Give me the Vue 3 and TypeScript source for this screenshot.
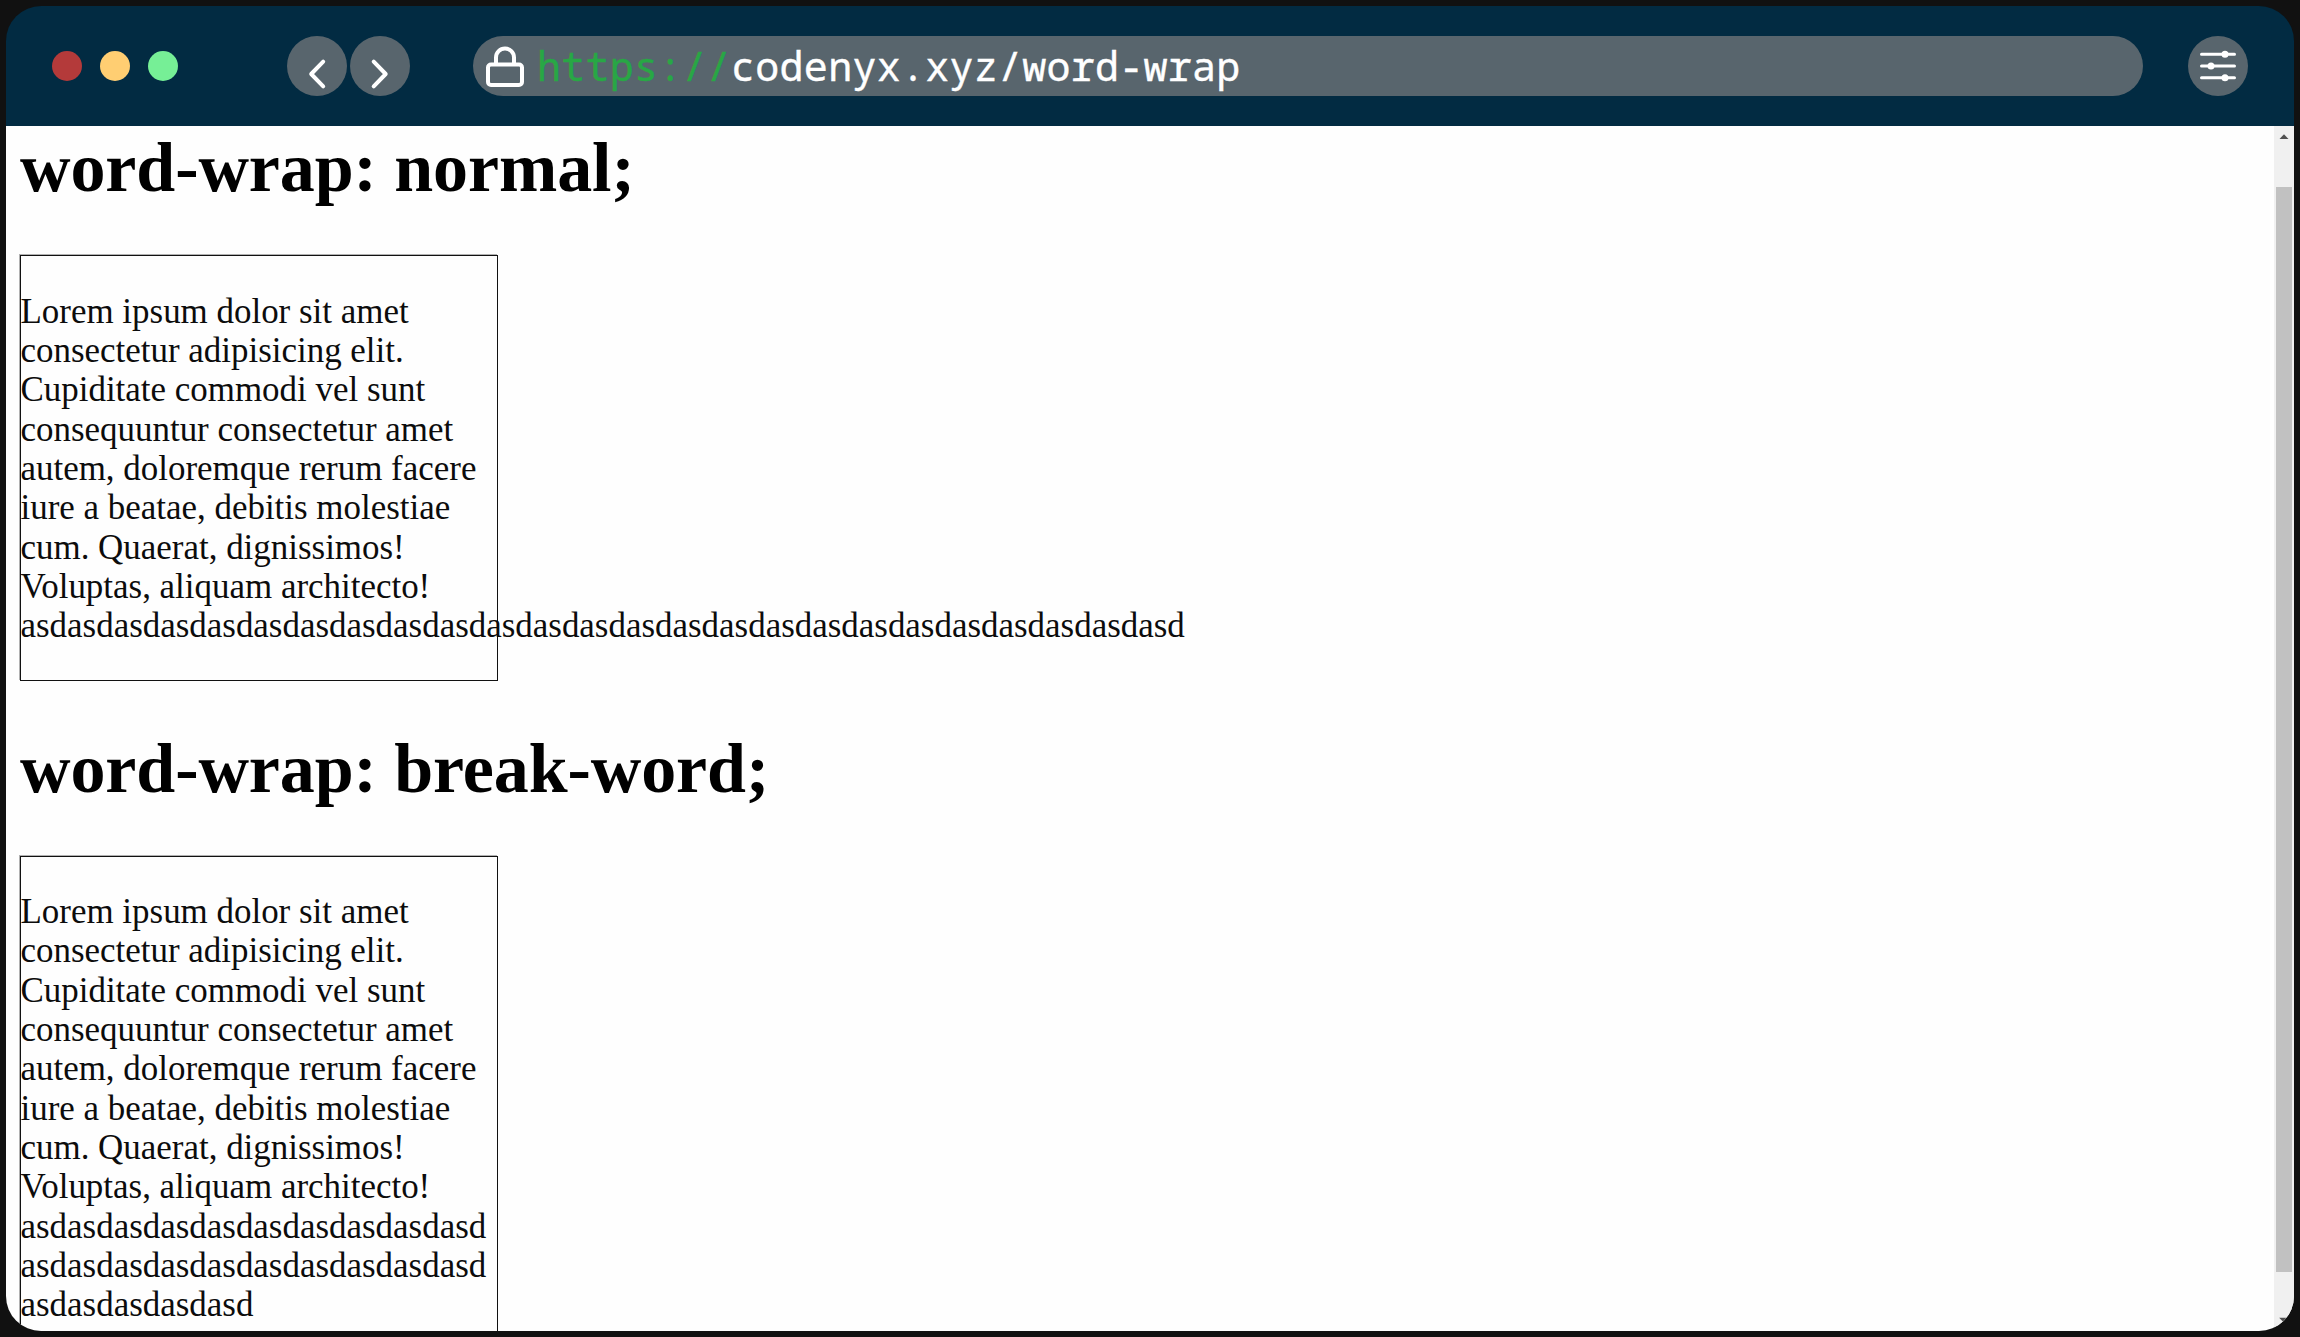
<script setup lang="ts">
interface Demo {
  value: string
  wrap: 'normal' | 'break-word'
}

const demos: Demo[] = [
  { value: 'normal', wrap: 'normal' },
  { value: 'break-word', wrap: 'break-word' },
]

const lights: string[] = ['red', 'yellow', 'green']
const longWord: string = 'asd'.repeat(25)
</script>

<template>
  <div class="frame">
    <div class="window">
      <header class="toolbar">
        <div class="lights">
          <span v-for="c in lights" :key="c" class="light" :class="c"></span>
        </div>
        <nav class="nav">
          <span class="round">
            <svg width="60" height="60" viewBox="0 0 60 60"><path d="M36.2 25.7 L24.2 38 L36.2 50.3" /></svg>
          </span>
          <span class="round">
            <svg width="60" height="60" viewBox="0 0 60 60"><path d="M23.7 25.7 L35.7 38 L23.7 50.3" /></svg>
          </span>
        </nav>
        <div class="address">
          <svg class="lock" width="38" height="41" viewBox="0 0 38 41">
            <rect x="2" y="18.5" width="34" height="20.5" rx="3" />
            <path d="M10 18 V11.5 a9 9 0 0 1 18 0 V18" />
          </svg>
          <span class="url"><span class="scheme">https://</span>codenyx.xyz/word-wrap</span>
        </div>
        <span class="round settings">
          <svg width="60" height="60" viewBox="0 0 60 60">
            <path d="M13.5 18.3 H46.5 M13.5 30 H46.5 M13.5 41.7 H46.5" />
            <circle cx="37" cy="18.3" r="3.5" />
            <circle cx="23" cy="30" r="3.5" />
            <circle cx="37" cy="41.7" r="3.5" />
          </svg>
        </span>
      </header>
      <div class="viewport">
        <main class="page">
          <section v-for="d in demos" :key="d.value" class="demo">
            <h1>word-wrap: {{ d.value }};</h1>
            <div class="box" :class="d.wrap">
              <p>
                Lorem ipsum dolor sit amet consectetur adipisicing elit. Cupiditate commodi vel sunt
                consequuntur consectetur amet autem, doloremque rerum facere iure a beatae, debitis
                molestiae cum. Quaerat, dignissimos! Voluptas, aliquam architecto!
                {{ longWord }}
              </p>
            </div>
          </section>
        </main>
        <div class="scrollbar">
          <svg class="arrow" width="20" height="61" viewBox="0 0 20 61"><path d="M5.5 13 L10 8.3 L14.5 13 Z" /></svg>
          <div class="thumb"></div>
          <svg class="arrow" width="20" height="59" viewBox="0 0 20 59"><path d="M5.2 45.8 H14.8 L10 50.7 Z" /></svg>
        </div>
      </div>
    </div>
  </div>
</template>

<style>
body {
  margin: 0;
  background: #111;
}
</style>

<style scoped>
.frame {
  box-sizing: border-box;
  width: 2300px;
  height: 1337px;
  padding: 6px;
  background: #111;
  overflow: hidden;
}
.window {
  display: flex;
  flex-direction: column;
  height: 1325px;
  border-radius: 35px;
  overflow: hidden;
}
.toolbar {
  display: flex;
  flex: none;
  align-items: center;
  box-sizing: border-box;
  height: 120px;
  padding: 0 46px;
  background: #022b42;
}
.lights {
  display: flex;
  gap: 18px;
  width: 235px;
}
.light {
  width: 30px;
  height: 30px;
  border-radius: 50%;
}
.red { background: #b43a3a; }
.yellow { background: #ffce72; }
.green { background: #76ef96; }
.nav {
  display: flex;
  gap: 3px;
}
.round {
  flex: none;
  width: 60px;
  height: 60px;
  border-radius: 50%;
  background: #58656d;
}
.round svg {
  display: block;
  fill: none;
  stroke: #fff;
  stroke-width: 4;
  stroke-linecap: round;
  stroke-linejoin: round;
}
.address {
  display: flex;
  align-items: center;
  box-sizing: border-box;
  width: 1670px;
  height: 60px;
  margin-left: 63px;
  padding-left: 13px;
  border-radius: 30px;
  background: #58656d;
}
.lock {
  flex: none;
  fill: none;
  stroke: #fff;
  stroke-width: 4;
}
.url {
  margin-left: 13px;
  color: #fff;
  font: 40px/60px "Noto Sans Mono", "DejaVu Sans Mono", monospace;
  letter-spacing: 0.26px;
  white-space: nowrap;
  -webkit-text-stroke: 0.4px currentColor;
}
.scheme {
  color: #28a745;
}
.settings {
  margin-left: 45px;
}
.settings svg {
  stroke-width: 3;
}
.settings circle {
  fill: #fff;
  stroke: none;
}
.viewport {
  display: flex;
  flex: 1;
  min-height: 0;
  background: #fefefe;
}
.page {
  flex: 1;
  padding-left: 14px;
  overflow: hidden;
  font-family: "Liberation Serif", "Times New Roman", serif;
}
.demo {
  height: 600.5px;
}
h1 {
  height: 129px;
  margin: 0;
  color: #000;
  font-size: 70px;
  line-height: 84px;
  letter-spacing: -0.09px;
}
.box {
  box-sizing: border-box;
  width: 478px;
  height: 426px;
  border: 1px solid #111;
  box-shadow: -1px -1px 0 rgba(0, 0, 0, 0.3);
  color: #0c0c0c;
  font-size: 34.95px;
  line-height: 39.33px;
}
.box p {
  margin: 35.6px 0 0 -0.5px;
}
.break-word {
  height: 506px;
  word-wrap: break-word;
}
.scrollbar {
  display: flex;
  flex-direction: column;
  align-items: center;
  width: 20px;
  background: #f0f0f0;
}
.arrow {
  display: block;
  flex: none;
  fill: #505050;
}
.thumb {
  flex: 1;
  width: 16px;
  background: #c1c1c1;
}
</style>
